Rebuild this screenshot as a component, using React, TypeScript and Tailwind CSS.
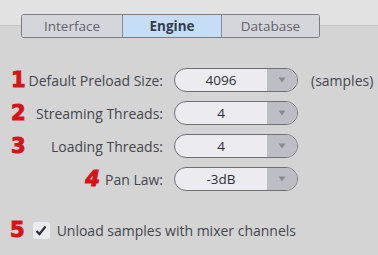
import React from 'react';

const Num: React.FC<{ n: string; className?: string }> = ({ n, className = '' }) => (
  <span
    className={`text-[21px] leading-none font-black text-[#d4141a] [-webkit-text-stroke:1px_#d4141a] ${className}`}
    style={{ fontFamily: '"DejaVu Sans", sans-serif' }}
  >
    {n}
  </span>
);

const Combo: React.FC<{ value: string }> = ({ value }) => (
  <div className="flex h-[24px] w-[124px] overflow-hidden rounded-full border border-[#6f6f74] bg-[#ebebf0]">
    <div className="flex flex-1 items-center justify-center text-[13.5px] text-[#2e3036]">{value}</div>
    <div className="flex w-[30px] items-center justify-center bg-[#bdbdc5]">
      <svg width="8" height="6" viewBox="0 0 8 6">
        <path d="M0.5 0.5 L7.5 0.5 L4 5.5 Z" fill="#8a8a92" />
      </svg>
    </div>
  </div>
);

const App: React.FC = () => {
  const rows = [
    { n: '1', label: 'Default Preload Size:', value: '4096', suffix: '(samples)', inline: false },
    { n: '2', label: 'Streaming Threads:', value: '4', inline: false },
    { n: '3', label: 'Loading Threads:', value: '4', inline: false },
    { n: '4', label: 'Pan Law:', value: '-3dB', inline: true },
  ];

  return (
    <div
      className="flex h-[255px] w-[378px] flex-col overflow-hidden bg-[#d4d4d4]"
      style={{ fontFamily: '"Open Sans", "Noto Sans", sans-serif' }}
    >
      <div className="h-[26px] shrink-0 border-b border-[#c6c6c6] bg-[#e2e2e2]" />

      {/* Tabs */}
      <div className="-mt-[12px] ml-[21px] flex h-[24px] w-[299px] overflow-hidden rounded-[3px] border border-[#7c7c82] text-[13.5px]">
        <div className="flex w-[100px] items-center justify-center bg-[#d5d5dc] text-[#62636b]">Interface</div>
        <div className="flex w-[100px] items-center justify-center border-x border-[#8a8a90] bg-[#c5ddf6] font-bold text-[#353c4c]">
          Engine
        </div>
        <div className="flex flex-1 items-center justify-center bg-[#d5d5dc] text-[#62636b]">Database</div>
      </div>

      {/* Settings rows */}
      <div className="mt-[30px] flex flex-col gap-[9px]">
        {rows.map((r) => (
          <div key={r.n} className="flex h-[24px] items-center">
            <div
              className={`flex w-[163px] items-center pl-[11px] ${r.inline ? 'justify-end' : 'justify-between'}`}
            >
              <Num n={r.n} className={r.inline ? 'mr-[5px] italic' : ''} />
              <span className="text-[14px] text-[#45464e]">{r.label}</span>
            </div>
            <div className="ml-[11px]">
              <Combo value={r.value} />
            </div>
            {r.suffix && <span className="ml-[13px] text-[14px] text-[#45464e]">{r.suffix}</span>}
          </div>
        ))}
      </div>

      {/* Checkbox */}
      <div className="mt-[29px] flex items-center pl-[10px]">
        <Num n="5" />
        <div className="ml-[8px] flex h-[17px] w-[17px] items-center justify-center rounded-[3px] bg-[#ebebf0]">
          <svg width="12" height="11" viewBox="0 0 12 11">
            <path d="M1.5 6 L4.5 9 L10.5 1.5" fill="none" stroke="#2b3142" strokeWidth="2.2" />
          </svg>
        </div>
        <span className="ml-[7px] text-[14px] text-[#45464e]">Unload samples with mixer channels</span>
      </div>
    </div>
  );
};

export default App;
